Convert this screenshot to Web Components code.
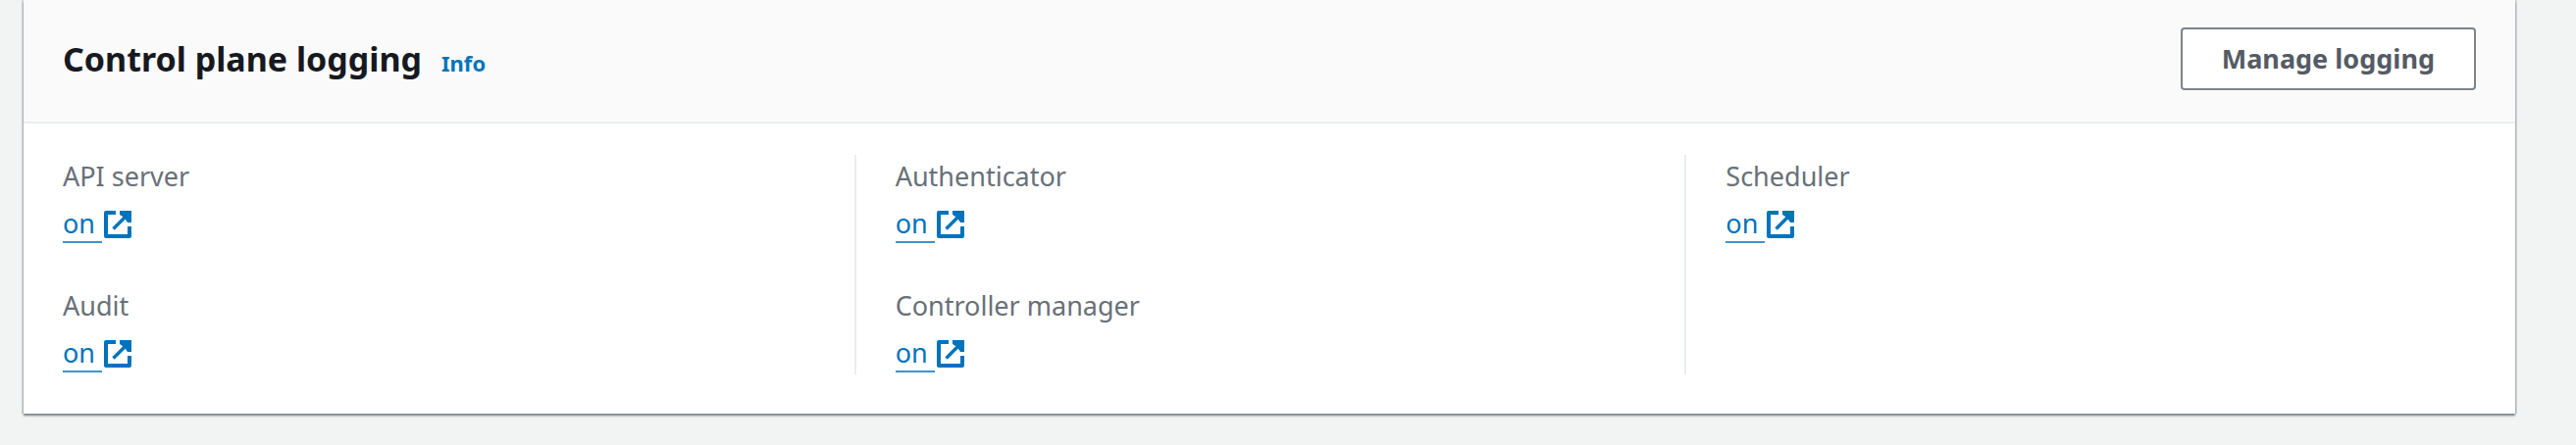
<!DOCTYPE html>
<html lang="en">
<head>
<meta charset="utf-8">
<title>Control plane logging</title>
<style>
  body {
    margin: 0;
    background: #f2f3f3;
    color: #16191f;
    font-family: "Noto Sans", "Open Sans", sans-serif;
    font-size: 27px;
    line-height: 44px;
  }
</style>
</head>
<body>
<logging-page></logging-page>

<script>
function define(name, html, setup) {
  const template = document.createElement('template');
  template.innerHTML = html;
  customElements.define(name, class extends HTMLElement {
    connectedCallback() {
      if (this.shadowRoot) return;
      this.attachShadow({ mode: 'open' }).append(template.content.cloneNode(true));
      if (setup) setup(this, this.shadowRoot);
    }
  });
}

define('external-icon', `
  <style>
    :host { display: block; width: 28px; height: 28px; color: #0073bb; }
    svg { display: block; width: 100%; height: 100%; }
  </style>
  <svg viewBox="0 0 28 28" fill="none" stroke="currentColor" stroke-width="4" aria-hidden="true">
    <path d="M12 2H2v24h24V16" stroke-linejoin="round"/>
    <path d="M9.5 18.5 23 5" stroke-width="3.4"/>
    <path d="M16 0h12v12h-4L22 9 19 6 16 4z" fill="currentColor" stroke="none"/>
  </svg>`);

define('external-link', `
  <style>
    :host { display: block; }
    a { display: inline-flex; align-items: center; gap: 2px; color: #0073bb; text-decoration: none; }
    .label { padding-right: 7px; border-bottom: 2px solid #3d94cb; line-height: 36px; }
  </style>
  <a href="#logs"><span class="label"><slot></slot></span><external-icon></external-icon></a>`);

define('log-field', `
  <style>
    :host { display: block; }
    dl, dd { margin: 0; }
    dl { display: grid; gap: 4px; }
    dt { color: #687078; }
    dd { height: 44px; }
  </style>
  <dl><dt></dt><dd><external-link><slot></slot></external-link></dd></dl>`,
  (host, root) => { root.querySelector('dt').textContent = host.getAttribute('label'); });

define('column-layout', `
  <style>
    :host { display: grid; grid-template-columns: repeat(3, minmax(0, 1fr)); padding: 32px 0 40px; }
  </style>
  <slot></slot>`);

define('layout-column', `
  <style>
    :host { display: grid; align-content: start; gap: 40px; padding: 0 40px; }
    :host(:not(:first-of-type)) { border-left: 2px solid #eaeded; }
  </style>
  <slot></slot>`);

define('action-button', `
  <style>
    :host { display: block; }
    button {
      display: block; min-height: 64px; padding: 0 40px; box-sizing: border-box;
      border: 2px solid #7d8389; border-radius: 4px; background: #fff;
      color: #545b64; font: inherit; font-weight: 700; line-height: 44px; cursor: pointer;
    }
  </style>
  <button type="button"><slot></slot></button>`);

define('section-card', `
  <style>
    :host {
      display: block; background: #fff;
      box-shadow: 0 2px 2px 0 rgba(0, 28, 36, .55), 2px 0 0 0 #d5dbdb, -2px 0 0 0 #d5dbdb;
    }
    header {
      display: flex; align-items: center; justify-content: space-between; gap: 24px;
      padding: 28px 40px 32px; background: #fafafa; border-bottom: 2px solid #eaeded;
    }
    .title { display: flex; align-items: baseline; gap: 20px; }
    h2 { margin: 0; font-size: 34px; line-height: 44px; font-weight: 700; }
    a { color: #0073bb; font-size: 22px; line-height: 32px; font-weight: 700; text-decoration: none; }
  </style>
  <section>
    <header>
      <div class="title"><h2><slot name="title"></slot></h2><a href="#info">Info</a></div>
      <slot name="actions"></slot>
    </header>
    <slot></slot>
  </section>`);

define('logging-page', `
  <style>
    :host { display: block; padding: 0 62px 32px 24px; }
  </style>
  <section-card>
    <span slot="title">Control plane logging</span>
    <action-button slot="actions">Manage logging</action-button>
    <column-layout>
      <layout-column>
        <log-field label="API server">on</log-field>
        <log-field label="Audit">on</log-field>
      </layout-column>
      <layout-column>
        <log-field label="Authenticator">on</log-field>
        <log-field label="Controller manager">on</log-field>
      </layout-column>
      <layout-column>
        <log-field label="Scheduler">on</log-field>
      </layout-column>
    </column-layout>
  </section-card>`);
</script>
</body>
</html>
